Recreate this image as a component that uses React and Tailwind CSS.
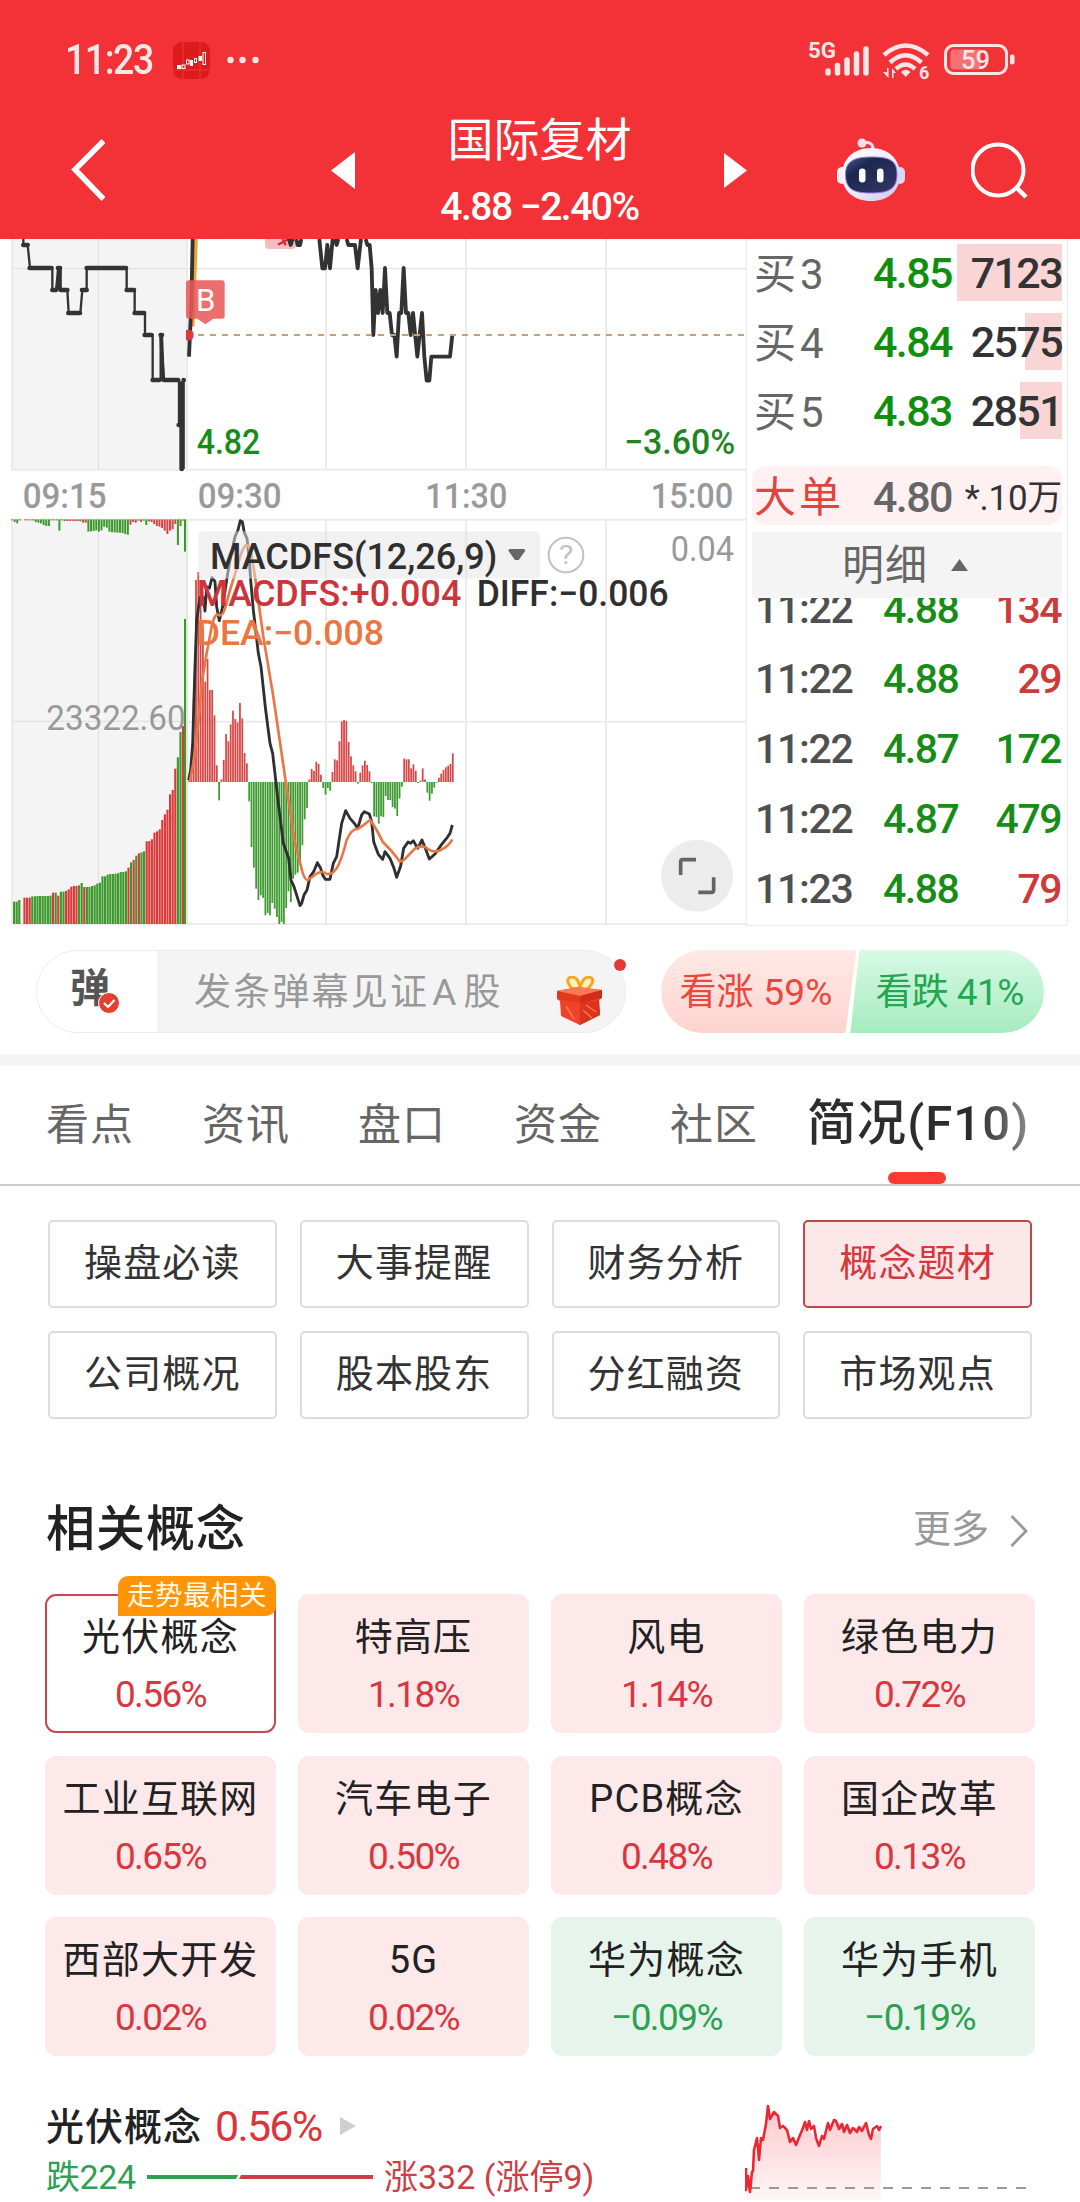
const bids = [
  { label: "3", price: "4.85", volume: "7123", depth: "w-[105px]" },
  { label: "4", price: "4.84", volume: "2575", depth: "w-[37px]" },
  { label: "5", price: "4.83", volume: "2851", depth: "w-[42px]" },
];

const trades = [
  { time: "11:22", price: "4.88", volume: "134", up: true },
  { time: "11:22", price: "4.88", volume: "29", up: true },
  { time: "11:22", price: "4.87", volume: "172", up: false },
  { time: "11:22", price: "4.87", volume: "479", up: false },
  { time: "11:23", price: "4.88", volume: "79", up: true },
];

const tabs = ["看点", "资讯", "盘口", "资金", "社区"];

const sections = ["操盘必读", "大事提醒", "财务分析", "概念题材", "公司概况", "股本股东", "分红融资", "市场观点"];

const concepts = [
  { name: "光伏概念", change: "0.56%", selected: true },
  { name: "特高压", change: "1.18%" },
  { name: "风电", change: "1.14%" },
  { name: "绿色电力", change: "0.72%" },
  { name: "工业互联网", change: "0.65%" },
  { name: "汽车电子", change: "0.50%" },
  { name: "PCB概念", change: "0.48%" },
  { name: "国企改革", change: "0.13%" },
  { name: "西部大开发", change: "0.02%" },
  { name: "5G", change: "0.02%" },
  { name: "华为概念", change: "−0.09%", down: true },
  { name: "华为手机", change: "−0.19%", down: true },
];

// MACD histogram, one bar per minute from 09:30
const macd = [
  5, 20, 250, 606, 630, 556, 466, 301, 369, 276, 276, 200, 50, -55, 8, 66, 144, 122, 173, 214, 189, 179, 237, 191, 87,
  56, -58, -195, -257, -320, -354, -340, -348, -400, -393, -400, -363, -380, -405, -426, -420, -426, -378, -328, -360,
  -290, -278, -272, -240, -190, -112, -78, 8, 39, 33, 61, 54, 22, -18, -38, -18, -26, 30, 68, 65, 122, 182, 186, 183,
  120, 77, 50, 32, -5, 28, 50, 64, 51, 32, -3, -103, -105, -125, -103, -105, -42, -54, -54, -75, -80, -102, -50, -14,
  70, 68, 68, 41, 53, 34, -3, 4, 41, 8, -32, -56, -35, -17, -2, 13, 25, 36, 44, 49, 54, 86,
];

// Opening auction: matched volume (grows from the bottom), negative = green
const auction = [
  -67, -67, -72, 0, 79, 79, 79, -83, -83, -84, -84, -84, -84, -84, -85, 94, -94, 85, -97, -97, 99, 104, 112, 114, 114,
  -116, -123, 111, -111, -111, -114, -116, -121, -124, -143, -143, -148, -150, -150, -151, -152, -156, -156, -158, 169,
  -185, 192, -205, 212, -215, -218, 248, 249, 254, 274, 278, 284, 312, 329, 343, 389, 402, 466, -500, -576, 594,
];

// Opening auction: unmatched volume (hangs from the top)
const unmatched = [
  3, -8, -12, -3, 0, 3, 3, 3, 3, -8, -10, -12, -17, -20, -20, 3, 3, -3, -34, 3, -5, 5, 5, 5, 5, 5, -6, 10, 10, -37,
  -36, -35, -33, -37, -33, -22, -25, -37, -39, -39, -40, -40, -41, -44, -46, 16, 8, 10, -4, 8, -4, -17, 6, 8, 14, 20,
  22, 26, 34, 44, 34, 30, 14, -77, -20, 4,
];

function ChartText({ x, y, width, size = 106, fill = "#999", children, weight = 400 }) {
  return (
    <text x={x} y={y} fontSize={size} fill={fill} fontWeight={weight} textLength={width} lengthAdjust="spacingAndGlyphs">
      {children}
    </text>
  );
}

function StatusBar() {
  return (
    <div className="h-[101px] pl-[65px] pr-[65px] pt-[38px] flex justify-between">
      <div className="flex items-center h-[44px]">
        <span className="w-[108px]">
          <span className="inline-block origin-left scale-x-[.89] text-[42px] leading-[44px] font-medium tracking-[-1.6px] text-[#ffe6e6]">
            11:23
          </span>
        </span>
        <svg width="37" height="37" viewBox="0 0 37 37">
          <rect width="37" height="37" rx="9" fill="#de1a1d" />
          <path d="M10 0V37M27 0V37M0 28H37" stroke="#e93b3b" strokeWidth="1" />
          <g fill="#fff">
            <rect x="4" y="23" width="4" height="4" />
            <rect x="17" y="18" width="3" height="6" />
            <rect x="25.5" y="14" width="3.5" height="5" />
          </g>
          <g fill="none" stroke="#fff" strokeWidth="1">
            <rect x="9" y="23" width="3" height="3.5" />
            <rect x="13.5" y="18" width="2.6" height="4" />
            <rect x="21.5" y="16.5" width="2" height="4" />
            <rect x="30" y="10.500" width="2.5" height="12" />
          </g>
        </svg>
        <svg className="ml-[17px]" width="32" height="8" viewBox="0 0 32 8" fill="#ffe6e6">
          <circle cx="3.5" cy="4" r="3.200" />
          <circle cx="15.500" cy="4" r="3.200" />
          <circle cx="28.500" cy="4" r="3.200" />
        </svg>
      </div>
      <svg width="207" height="44" viewBox="808 38 207 44" fill="#ffe6e6">
        <text x="808" y="57.500" fontSize="22" fontWeight="700" textLength="28" lengthAdjust="spacingAndGlyphs">
          5G
        </text>
        <path
          d="M828 73V71M837.500 73V65.500M847 73V60M856.500 73V54M866 73V49"
          stroke="#ffe6e6"
          strokeWidth="5.500"
          strokeLinecap="round"
        />
        <g fill="none" stroke="#ffe6e6" strokeWidth="4.500">
          <path d="M884 55Q905.500 36 928 55" />
          <path d="M890 62.500Q905.500 48 921.500 62.500" />
          <path d="M896 69Q905.500 60 915 69" />
        </g>
        <path d="M901 72Q905.500 67.500 910.500 72L905.700 77Z" />
        <path d="M888.500 68V78L883 72H887V68ZM892 78V68L896 73H893.500V78Z" />
        <text x="919" y="78.500" fontSize="18" fontWeight="700">
          6
        </text>
        <rect x="945.500" y="45.500" width="61" height="28" rx="8" fill="none" stroke="#ffe6e6" strokeWidth="3" />
        <path d="M954 49.500H981V69.500H954Q950.500 69.500 950.500 66V53Q950.500 49.500 954 49.500Z" fill="#f67174" />
        <rect x="1010" y="54.500" width="4.500" height="10" rx="2" />
        <text x="961" y="69" fontSize="26" fontWeight="500" textLength="29" lengthAdjust="spacingAndGlyphs">
          59
        </text>
      </svg>
    </div>
  );
}

function Robot() {
  return (
    <svg className="ml-[90px]" width="68" height="66" viewBox="0 0 68 66">
      <defs>
        <linearGradient id="shell" x1="0" y1="0" x2="1" y2="1">
          <stop offset="0" stopColor="#ffffff" />
          <stop offset=".5" stopColor="#f5edfa" />
          <stop offset="1" stopColor="#c9c4ee" />
        </linearGradient>
        <linearGradient id="visor" x1="0" y1="0" x2="1" y2="1">
          <stop offset="0" stopColor="#46588a" />
          <stop offset=".3" stopColor="#1d2850" />
          <stop offset="1" stopColor="#343765" />
        </linearGradient>
      </defs>
      <path d="M26 6Q36 4 36 12" fill="none" stroke="#f6dfe6" strokeWidth="3" />
      <circle cx="25" cy="6" r="4.500" fill="#fbdfe5" />
      <rect x="0" y="30" width="10" height="17" rx="5" fill="#f3eefa" />
      <rect x="58" y="30" width="10" height="17" rx="5" fill="#dcd6f4" />
      <path d="M34 11C51 11 63 22 63 38C63 54 51 64 34 64C17 64 5 54 5 38C5 22 17 11 34 11Z" fill="url(#shell)" />
      <path
        d="M34 20C50 20 60 22 60 37C60 52 52 56 34 56C16 56 8.500 52 8.500 37C8.500 24 18 20 34 20Z"
        fill="url(#visor)"
        stroke="#8f7be0"
        strokeWidth="1"
      />
      <rect x="22" y="31.500" width="6.500" height="14" rx="3.200" fill="#fff" />
      <rect x="40" y="31.500" width="6.500" height="14" rx="3.200" fill="#fff" />
    </svg>
  );
}

function Header() {
  return (
    <header className="h-[239px] bg-[#f33237] text-white">
      <StatusBar />
      <div className="h-[138px] pl-[71px] flex items-center">
        <svg width="34" height="62" viewBox="0 0 34 62" fill="none" stroke="#fff" strokeWidth="5.500">
          <path d="M32.500 2L4 30.500L32.500 60" />
        </svg>
        <svg className="ml-[226px]" width="24" height="37" viewBox="0 0 24 37" fill="#fff">
          <path d="M24 0V37L0 18.500Z" />
        </svg>
        <div className="w-[369px] h-full flex flex-col items-center pt-[3px]">
          <h1 className="h-[71px] leading-[72px] text-[46px]">国际复材</h1>
          <p className="h-[64px] leading-[64px] text-[39px] font-medium tracking-[-1.500px]">4.88 −2.40%</p>
        </div>
        <svg width="23" height="35" viewBox="0 0 23 35" fill="#fff">
          <path d="M0 0V35L23 17.500Z" />
        </svg>
        <Robot />
        <svg className="ml-[66px]" width="58" height="58" viewBox="0 0 58 58" fill="none" stroke="#fff" strokeWidth="4">
          <circle cx="27" cy="29" r="25.500" />
          <path d="M45 46L55 56" strokeWidth="4.500" />
        </svg>
      </div>
    </header>
  );
}

function Charts() {
  return (
    <svg className="shrink-0" width="746" height="687" viewBox="0 0 746 687" fill="none">
      {/* price panel */}
      <g transform="translate(0 -9) scale(.33333)">
        <rect x="36" y="27" width="522" height="692" fill="#f4f4f4" />
        <path d="M36 116H2240M295 27V719" stroke="#dedede" strokeWidth="3" />
        <path d="M36 27V721M561 27V719M978 27V719M1398 27V719M1818 27V719M34 719H2240" stroke="#ebebeb" strokeWidth="6" />
        <path
          d="M70 27V45H83L90 114H157V180H168L175 114H182V180H202L206 249H241L247 180H260V114H380V180H404V249H435V315H458V450H482V315L492 450H537V585H545V717M551 717V450"
          stroke="#333"
          strokeWidth="7"
        />
        <path
          d="M70 45H83M89 114H154M157 180H168M174 114H180M182 180H202M205 249H240M246 180H260M260 114H378M380 180H402M404 249H432M434 315H454M458 450H478M482 315H486M492 450H534M536 585H542M545 717V460M551 450V451"
          stroke="#333"
          strokeWidth="14"
          strokeLinecap="round"
        />
        <path d="M484 320L489 450M176 116V180" stroke="#333" strokeWidth="11" />
        <path d="M588 27L583 160L578 290" stroke="#f0a530" strokeWidth="11" />
        <path d="M795 27H888V45Q888 57 876 57H807Q795 57 795 45Z" fill="#f7bcc0" />
        <path d="M834 44L866 27M848 27L857 46" stroke="#dc2a33" strokeWidth="7" />
        <g stroke="#333" strokeWidth="11.500" strokeLinejoin="round">
          <path d="M578 27L574 220L567 380" />
          <path d="M867 27L872 45L878 27M889 27L893 45H900L904 27M958 27L967 115H975L982 45L990 115L998 27M1005 27L1010 45L1015 27M1040 27L1045 45H1065L1073 115L1083 27M1097 27L1102 45H1109L1115 115L1120 315L1127 180L1134 249L1141 180L1148 249L1155 114L1162 249H1169L1176 315H1183L1190 380L1197 249H1204L1211 114L1218 249H1225L1232 315L1239 249L1252 380L1266 249L1273 380L1280 452H1288L1294 380H1350L1357 315" />
        </g>
        <path d="M594 315H2235" stroke="#bfa478" strokeWidth="6" strokeDasharray="18 18" />
        <path
          d="M566 151H666Q674 151 674 159V258Q674 266 666 266H640L616 283L592 266H566Q558 266 558 258V159Q558 151 566 151Z"
          fill="#e95a5a"
          fillOpacity=".87"
        />
        <path d="M558 300Q581 296 581 315Q581 335 558 331Z" fill="#d83a3f" />
        <ChartText x="588" y="242" width="58" size="92" fill="#fff">B</ChartText>
        <ChartText x="590" y="672" width="191" fill="#178c17" weight="500">4.82</ChartText>
        <ChartText x="1872" y="672" width="334" fill="#1f851f" weight="500">−3.60%</ChartText>
        <ChartText x="68" y="835" width="252" weight="500">09:15</ChartText>
        <ChartText x="593" y="833" width="252" weight="500">09:30</ChartText>
        <ChartText x="1276" y="833" width="246" weight="500">11:30</ChartText>
        <ChartText x="1952" y="833" width="248" weight="500">15:00</ChartText>
      </g>

      {/* MACD panel */}
      <g transform="translate(0 271) scale(.33333)">
        <rect x="36" y="28" width="522" height="1214" fill="#f4f4f4" />
        <path d="M36 634H558M295 28V1242" stroke="#dedede" strokeWidth="3" />
        <path
          d="M36 28V1242M978 28V1242M1398 28V1242M1818 28V1242M34 29H2240M558 635H2240M34 1242H2240"
          stroke="#ebebeb"
          strokeWidth="6"
        />
        <path d="M561 28V1242" stroke="#dfeadb" strokeWidth="6" />
        {auction.map((v, i) => (
          <rect key={i} x={39 + i * 7.8} y={1242 - Math.abs(v)} width="6.500" height={Math.abs(v)} fill={v > 0 ? "#dc3a3a" : "#3c9a2c"} />
        ))}
        <rect x="552" y="327" width="6" height="915" fill="#3c9a2c" />
        {unmatched.map((v, i) => (
          <rect key={i} x={33 + i * 7.9} y="28" width="6" height={Math.abs(v)} fill={v > 0 ? "#d84545" : "#3c9a2c"} />
        ))}
        <rect x="552" y="28" width="6" height="97" fill="#3c9a2c" />
        {macd.map((v, i) => (
          <rect
            key={i}
            x={564.5 + i * 6.94}
            y={v > 0 ? 816 - v : 816}
            width="5.300"
            height={Math.abs(v)}
            fill={v > 0 ? "#d94646" : "#3f9a32"}
          />
        ))}
        <path
          d="M566 810L572 780L578 700L584 500L590 330L600 262L610 262L615 303L620 230L628 235L636 203L645 215L650 290L658 332L668 290L680 210L690 150L705 80L714 60L721 32L727 35L733 68L741 85L748 150L752 210L760 300L775 430L783 470L797 600L810 700L818 730L835 880L850 1000L866 1045L873 1110L882 1130L893 1165L900 1187L905 1180L912 1155L921 1140L930 1100L941 1085L952 1058L962 1075L968 1095L976 1108H990L1000 1060L1010 1040L1025 940L1037 902L1050 925L1063 940L1073 955L1085 915L1093 905L1108 912L1115 935L1121 995L1130 1020L1135 1033L1148 1048L1155 1025L1170 1045L1182 1075L1190 1102L1202 1068L1211 1015L1224 996L1232 1000L1240 992L1253 1015L1266 990L1276 1015L1288 1047L1305 1032L1325 1003L1342 982L1350 970L1357 945"
          stroke="#2f2f2f"
          strokeWidth="8.500"
          strokeLinejoin="round"
        />
        <path
          d="M570 812L580 760L595 640L605 520L620 430L635 350Q645 305 658 316Q670 318 678 285L690 240L715 160Q730 100 742 106Q750 110 757 150L765 200L790 380L820 560L855 800L885 1000L902 1065Q912 1112 924 1110L940 1098Q962 1080 975 1089Q992 1100 1010 1075Q1025 1050 1040 990Q1055 955 1073 957Q1090 947 1110 930Q1120 940 1148 995Q1175 1020 1200 1055L1212 1050L1245 1016Q1268 1002 1285 1018Q1305 1030 1322 1020Q1345 1010 1357 988"
          stroke="#ea7545"
          strokeWidth="8"
        />
        <rect x="595" y="64" width="1025" height="142" rx="14" fill="#e4e4e4" fillOpacity=".52" />
        <ChartText x="630" y="177" width="862" size="112" fill="#2f2f2f" weight="500">MACDFS(12,26,9)</ChartText>
        <path d="M1528 117H1573L1576 122L1556 150H1545L1525 122Z" fill="#666" />
        <circle cx="1698" cy="135" r="52" stroke="#c2c2c2" strokeWidth="6" />
        <ChartText x="1676" y="163" width="44" size="80" fill="#c2c2c2">?</ChartText>
        <ChartText x="2012" y="153" width="190">0.04</ChartText>
        <ChartText x="590" y="288" width="794" size="110" fill="#cb353b" weight="500">MACDFS:+0.004</ChartText>
        <ChartText x="1430" y="288" width="576" size="110" fill="#2f2f2f" weight="500">DIFF:−0.006</ChartText>
        <ChartText x="590" y="404" width="562" size="106" fill="#ec7640" weight="500">DEA:−0.008</ChartText>
        <ChartText x="139" y="660" width="418">23322.60</ChartText>
        <circle cx="2091" cy="1097" r="108" fill="#ececec" />
        <path d="M2042 1095V1056Q2042 1049 2049 1049H2088M2095 1147H2134Q2141 1147 2141 1140V1102" stroke="#646464" strokeWidth="11" />
      </g>
    </svg>
  );
}

function OrderBook() {
  return (
    <div className="w-[322px] h-[687px] border border-t-0 border-[#ebebeb] pl-[5px] pr-[5px] pt-[5px]">
      <div className="flex flex-col gap-3">
        {bids.map((bid) => (
          <div key={bid.label} className="relative h-[57px] flex items-center text-[43px] leading-[59px] tracking-[-1.600px] font-medium">
            <div className={`absolute right-0 top-0 h-full bg-[#f9d5d5] ${bid.depth}`} />
            <span className="w-[121px] pl-[2px] pt-[3px] text-[42px] font-normal tracking-[4px] text-[#666]">买{bid.label}</span>
            <span className="pt-[2px] text-[#0f8f0f]">{bid.price}</span>
            <span className="relative ml-auto pt-[2px] text-[#333]">{bid.volume}</span>
          </div>
        ))}
      </div>

      <div className="mt-[27px] h-[59px] rounded-[14px] bg-[#fff1f2] flex items-center leading-[59px]">
        <span className="w-[121px] pl-[2px] pt-[3px] text-[42px] tracking-[3px] text-[#e0443e]">大单</span>
        <span className="pt-[3px] text-[43px] tracking-[-1.600px] font-medium text-[#666]">4.80</span>
        <span className="ml-auto pt-[6px] text-[35px] tracking-[-.3px] text-[#333]">*.10万</span>
      </div>

      <div className="mt-[7px] h-[66px] bg-[#f4f4f4] flex items-center justify-center gap-[23px] pr-[4px]">
        <span className="pt-[2px] text-[42px] leading-[66px] tracking-[1px] text-[#666]">明细</span>
        <svg width="17" height="12" viewBox="0 0 17 12" fill="#666">
          <path d="M8.500 0L17 12H0Z" />
        </svg>
      </div>

      <div className="h-[326px] overflow-hidden">
        <div className="-mt-[24px]">
          {trades.map((trade, i) => (
            <div key={i} className="h-[70px] flex items-center text-[41px] leading-[70px] font-medium tracking-[-1.500px]">
              <span className="w-[131px] pl-[3px] tracking-[-1.300px] text-[#505050]">{trade.time}</span>
              <span className="text-[#178c17]">{trade.price}</span>
              <span className={`ml-auto pr-[1px] ${trade.up ? "text-[#cc3a3a]" : "text-[#178c17]"}`}>{trade.volume}</span>
            </div>
          ))}
        </div>
      </div>
    </div>
  );
}

function Gift() {
  return (
    <svg width="48" height="50" viewBox="0 0 48 50">
      <path d="M24 15C12 14 8 1 16 1C22 1 24 9 24 14C24 9 27 1 33 1C41 2 35 14 24 15Z" fill="#fff2b8" stroke="#f5a623" strokeWidth="3" />
      <path d="M1 15L22 11L46 14V22L43 24L44 39L24 49L5 40L4 25L1 23Z" fill="#ee4328" />
      <path d="M1 15L22 11L46 14L24 20Z" fill="#fb7a55" />
      <path d="M1 15L24 20V27L1 23Z" fill="#e5391f" />
      <path d="M24 20L46 14V22L24 27Z" fill="#d22b19" />
      <path d="M24 27L43 24L44 39L24 49Z" fill="#db341f" />
      <path d="M10 30L18 43M30 29L40 36M27 34L36 42" stroke="#f77a4e" strokeWidth="1.500" />
    </svg>
  );
}

function CommentBar() {
  return (
    <div className="h-[128px] px-[36px] pt-[24px] flex">
      <div className="relative w-[591px] h-[83px] rounded-full border border-[#ebebeb] bg-[#f4f4f4] flex items-center">
        <div className="relative w-[122px] h-full rounded-l-full border-r border-[#ebebeb] bg-white pl-[33px]">
          <span className="text-[40px] leading-[76px] font-bold text-[#555]">弹</span>
          <svg className="absolute left-[61px] top-[41px]" width="22" height="22" viewBox="0 0 22 22">
            <circle cx="11" cy="11" r="10.500" fill="#e5402f" stroke="#fff" />
            <path d="M6 11L10 15L16.500 8" fill="none" stroke="#fff" strokeWidth="2.200" />
          </svg>
        </div>
        <span className="ml-[35px] pt-[2px] text-[37px] leading-[80px] tracking-[2.200px] text-[#999]">
          发条弹幕见证<span className="pl-[3px] pr-[5px]">A</span>股
        </span>
        <div className="ml-auto mr-[21px] mt-[18px]">
          <Gift />
        </div>
        <span className="absolute -right-[1px] top-[8px] size-[12px] rounded-full bg-[#e33a35]" />
      </div>
      <div className="ml-[35px] w-[383px] h-[83px] rounded-full overflow-hidden flex text-[37px] leading-[85px] tracking-[.2px]">
        <div className="w-[195px] -mr-[8px] pl-[18px] whitespace-nowrap bg-linear-to-b from-[#ffe9e6] to-[#fdd4cf] text-[#e8483f] [clip-path:polygon(0_0,100%_0,184px_100%,0_100%)]">
          看涨 59%
        </div>
        <div className="flex-1 pl-[25px] ml-[2px] whitespace-nowrap tracking-[-.6px] bg-linear-to-b from-[#d8f9e5] to-[#a4ecbe] text-[#25a652] [clip-path:polygon(9px_0,100%_0,100%_100%,0_100%)]">
          看跌 41%
        </div>
      </div>
    </div>
  );
}

function Tabs() {
  return (
    <nav className="h-[120px] border-b-2 border-[#cccccc] pl-[46px] flex items-start">
      {tabs.map((tab) => (
        <span key={tab} className="w-[156px] text-[43px] leading-[119px] tracking-[1px] text-[#666]">
          {tab}
        </span>
      ))}
      <div className="relative -ml-[19px] h-[118px]">
        <span className="bg-linear-to-r from-[#2d2d2d] from-75% to-[#8a8a8a] bg-clip-text text-transparent text-[49px] leading-[116px] font-medium tracking-[1.100px]">
          简况(F10)
        </span>
        <span className="absolute left-[81px] bottom-0 w-[58px] h-[12px] rounded-full bg-[#fb3a34]" />
      </div>
    </nav>
  );
}

function SectionButtons() {
  return (
    <div className="mt-[34px] px-[48px] grid grid-cols-4 gap-x-[23px] gap-y-[23px]">
      {sections.map((name) => (
        <button
          key={name}
          className={`h-[88px] rounded-[5px] border-2 text-[38px] leading-[82px] pb-[2px] tracking-[1.200px] ${
            name === "概念题材" ? "border-[#b9494b] bg-[#fde8e9] text-[#d5383c]" : "border-[#dcdcdc] text-[#333]"
          }`}
        >
          {name}
        </button>
      ))}
    </div>
  );
}

function ConceptCard({ name, change, selected, down }) {
  const bg = selected ? "bg-white border-2 border-[#c5484f]" : down ? "bg-[#e6f4eb]" : "bg-[#fde8ea]";
  return (
    <div className={`relative h-[139px] rounded-[11px] flex flex-col items-center ${bg}`}>
      <span className={`h-[55px] text-[38px] leading-[56px] tracking-[1.200px] text-[#222] ${selected ? "mt-[13px]" : "mt-[15px]"}`}>
        {name}
      </span>
      <span className={`h-[62px] text-[37px] leading-[62px] tracking-[-1.600px] ${down ? "text-[#2ca152]" : "text-[#d9363e]"}`}>
        {change}
      </span>
      {selected && (
        <span className="absolute -right-[2px] -top-[20px] w-[158px] h-[40px] rounded-[10px] rounded-bl-none bg-[#ff9408] text-center text-[27.500px] leading-[40px] tracking-[.5px] text-[#fff9e6]">
          走势最相关
        </span>
      )}
    </div>
  );
}

function ConceptSummary() {
  return (
    <div className="mt-[26px] pl-[46px] flex">
      <div className="w-[699px]">
        <div className="h-[88px] flex items-center">
          <span className="pt-[2px] text-[38px] font-medium tracking-[1px] text-[#222]">光伏概念</span>
          <span className="ml-[13px] text-[43px] tracking-[-1.800px] text-[#dc343d]">0.56%</span>
          <svg className="ml-[19px]" width="16" height="18" viewBox="0 0 16 18" fill="#cfcfcf">
            <path d="M0 0V18L16 9Z" />
          </svg>
        </div>
        <div className="-mt-[11px] h-[36px] flex items-center text-[34px] leading-[36px] tracking-[-.4px]">
          <span className="w-[101px] text-[#2f9f56]">跌224</span>
          <svg width="226" height="4" viewBox="0 0 226 4">
            <path d="M0 0H91L89 4H0Z" fill="#2f9f50" />
            <path d="M94 0H226V4H92Z" fill="#d23c46" />
          </svg>
          <span className="ml-[11px] tracking-[0px] text-[#cc3f47]">涨332 (涨停9)</span>
        </div>
      </div>
      <svg width="290" height="120" viewBox="745 2082 290 120" fill="none">
        <defs>
          <linearGradient id="area" x1="0" y1="0" x2="0" y2="1">
            <stop offset="0" stopColor="#fbc9cd" />
            <stop offset="1" stopColor="#fff6f6" />
          </linearGradient>
        </defs>
        <g transform="translate(0 1900) scale(.6887 .33333)">
          <path
            d="M1084 900V805L1086 850L1093 815L1095 750L1102 780L1106 715L1111 685L1115 620L1118 650L1124 635L1134 685L1142 690L1155 735L1168 675L1180 705L1189 740L1202 690L1212 660L1224 675L1240 688L1258 670L1264 710L1279 680V900Z"
            fill="url(#area)"
          />
        </g>
        <path d="M750 2188H1029" stroke="#999" strokeWidth="1.800" strokeDasharray="10 9" />
        <path
          d="M746 2168L746 2190L748 2176L750 2192L752 2172L753 2171L754 2150L757 2138L759 2160L761 2138L763 2140L766 2124L768 2106L770 2119L774 2112L778 2116L780 2128L783 2126L787 2130L790 2142L793 2138L796 2145L800 2135L803 2128L805 2122L807 2130L809 2121L811 2129L814 2126L816 2138L819 2146L822 2136L824 2139L828 2123L830 2130L834 2120L836 2121L839 2129L842 2124L844 2132L847 2125L850 2133L853 2128L857 2132L859 2127L862 2131L866 2123L869 2135L871 2139L873 2129L877 2126L879 2130L881 2126"
          stroke="#ea2733"
          strokeWidth="2.600"
          strokeLinejoin="round"
        />
      </svg>
    </div>
  );
}

export default function App() {
  return (
    <div className="w-[1080px] h-[2202px] overflow-hidden bg-white font-[Roboto,'Noto_Sans_CJK_SC',sans-serif]">
      <Header />
      <div className="flex">
        <Charts />
        <OrderBook />
      </div>
      <CommentBar />
      <div className="h-[12px] bg-[#f4f4f4]" />
      <Tabs />
      <SectionButtons />

      <div className="mt-[72px] h-[77px] pl-[46px] pr-[52px] flex items-center justify-between">
        <h2 className="text-[49px] font-medium tracking-[1px] text-[#222]">相关概念</h2>
        <div className="flex items-center text-[38px] text-[#999]">
          更多
          <svg className="ml-[21px] mt-[2px]" width="18" height="32" viewBox="0 0 18 32" fill="none" stroke="#999" strokeWidth="2.800">
            <path d="M1.500 1L16 16L1.500 31" />
          </svg>
        </div>
      </div>

      <div className="mt-[26px] px-[45px] grid grid-cols-4 gap-x-[22px] gap-y-[22.500px]">
        {concepts.map((concept) => (
          <ConceptCard key={concept.name} {...concept} />
        ))}
      </div>
      <ConceptSummary />
    </div>
  );
}
